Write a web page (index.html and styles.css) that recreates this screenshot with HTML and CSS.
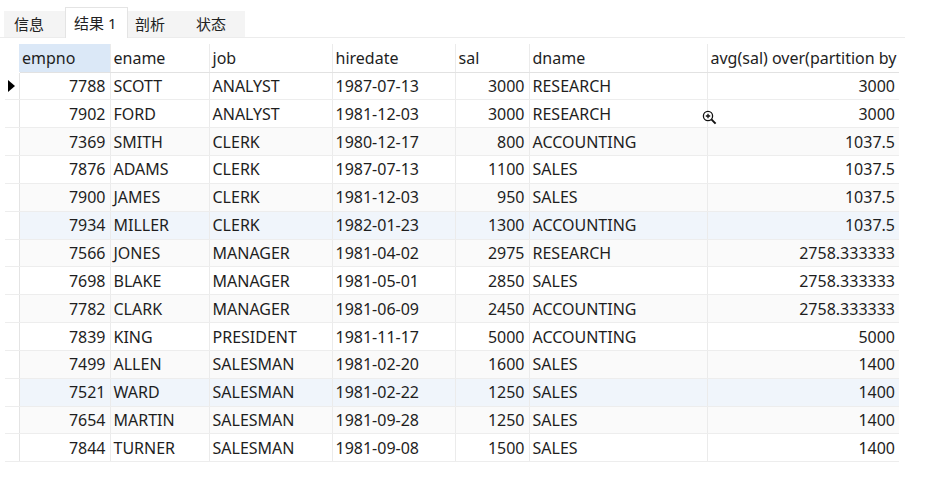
FILE: index.html
```html
<!DOCTYPE html>
<html lang="zh">
<head>
<meta charset="utf-8">
<link rel="stylesheet" href="styles.css">
</head>
<body>
<div class="page">
  <div class="tabbar">
    <div class="tab t1">信息</div>
    <div class="tab active">结果 1</div>
    <div class="tab t3">剖析</div>
    <div class="tab t4">状态</div>
  </div>
  <div class="gridwrap">
    <table class="grid">
      <colgroup>
        <col class="c-ind"><col class="c-empno"><col class="c-ename"><col class="c-job"><col class="c-hire"><col class="c-sal"><col class="c-dname"><col class="c-avg">
      </colgroup>
      <thead>
        <tr>
          <th class="ind"></th>
          <th class="sorted">empno</th>
          <th>ename</th>
          <th>job</th>
          <th>hiredate</th>
          <th>sal</th>
          <th>dname</th>
          <th>avg(sal) over(partition by</th>
        </tr>
      </thead>
      <tbody>
        <tr><td class="ind"><span class="arrow"></span></td><td class="num">7788</td><td>SCOTT</td><td>ANALYST</td><td>1987-07-13</td><td class="num">3000</td><td>RESEARCH</td><td class="num">3000</td></tr>
        <tr><td class="ind"></td><td class="num">7902</td><td>FORD</td><td>ANALYST</td><td>1981-12-03</td><td class="num">3000</td><td>RESEARCH</td><td class="num">3000</td></tr>
        <tr class="alt"><td class="ind"></td><td class="num">7369</td><td>SMITH</td><td>CLERK</td><td>1980-12-17</td><td class="num">800</td><td>ACCOUNTING</td><td class="num">1037.5</td></tr>
        <tr><td class="ind"></td><td class="num">7876</td><td>ADAMS</td><td>CLERK</td><td>1987-07-13</td><td class="num">1100</td><td>SALES</td><td class="num">1037.5</td></tr>
        <tr class="alt"><td class="ind"></td><td class="num">7900</td><td>JAMES</td><td>CLERK</td><td>1981-12-03</td><td class="num">950</td><td>SALES</td><td class="num">1037.5</td></tr>
        <tr class="hl"><td class="ind"></td><td class="num">7934</td><td>MILLER</td><td>CLERK</td><td>1982-01-23</td><td class="num">1300</td><td>ACCOUNTING</td><td class="num">1037.5</td></tr>
        <tr class="alt"><td class="ind"></td><td class="num">7566</td><td>JONES</td><td>MANAGER</td><td>1981-04-02</td><td class="num">2975</td><td>RESEARCH</td><td class="num">2758.333333</td></tr>
        <tr><td class="ind"></td><td class="num">7698</td><td>BLAKE</td><td>MANAGER</td><td>1981-05-01</td><td class="num">2850</td><td>SALES</td><td class="num">2758.333333</td></tr>
        <tr class="alt"><td class="ind"></td><td class="num">7782</td><td>CLARK</td><td>MANAGER</td><td>1981-06-09</td><td class="num">2450</td><td>ACCOUNTING</td><td class="num">2758.333333</td></tr>
        <tr><td class="ind"></td><td class="num">7839</td><td>KING</td><td>PRESIDENT</td><td>1981-11-17</td><td class="num">5000</td><td>ACCOUNTING</td><td class="num">5000</td></tr>
        <tr class="alt"><td class="ind"></td><td class="num">7499</td><td>ALLEN</td><td>SALESMAN</td><td>1981-02-20</td><td class="num">1600</td><td>SALES</td><td class="num">1400</td></tr>
        <tr class="hl"><td class="ind"></td><td class="num">7521</td><td>WARD</td><td>SALESMAN</td><td>1981-02-22</td><td class="num">1250</td><td>SALES</td><td class="num">1400</td></tr>
        <tr class="alt"><td class="ind"></td><td class="num">7654</td><td>MARTIN</td><td>SALESMAN</td><td>1981-09-28</td><td class="num">1250</td><td>SALES</td><td class="num">1400</td></tr>
        <tr><td class="ind"></td><td class="num">7844</td><td>TURNER</td><td>SALESMAN</td><td>1981-09-08</td><td class="num">1500</td><td>SALES</td><td class="num">1400</td></tr>
      </tbody>
    </table>
    <svg class="cursor" width="16" height="16" viewBox="0 0 16 16">
      <circle cx="6" cy="6" r="4.6" fill="#fff" stroke="#111" stroke-width="1.3"/>
      <path d="M3.8 6h4.4M6 3.8v4.4" stroke="#111" stroke-width="1.3"/>
      <path d="M9.4 9.4l4.2 4.2" stroke="#111" stroke-width="2"/>
    </svg>
  </div>
</div>
</body>
</html>
```
FILE: styles.css
```css
html, body {
  margin: 0;
  padding: 0;
  background: #ffffff;
}
body {
  font-family: "Noto Sans", "Noto Sans CJK SC", sans-serif;
  color: #1e1e1e;
  width: 933px;
  height: 489px;
  overflow: hidden;
}
.tabbar {
  display: flex;
  align-items: flex-end;
  height: 37px;
  border-bottom: 1px solid #ececec;
  margin-right: 28px;
  padding-left: 4px;
}
.tab {
  height: 26px;
  line-height: 26px;
  font-size: 15px;
  background: #f4f4f4;
  color: #222;
  box-sizing: border-box;
}
.tab.t1 {
  width: 61px;
  padding-left: 10px;
}
.tab.active {
  width: 63px;
  padding-left: 8px;
  background: #ffffff;
  height: 31px;
  line-height: 30px;
  border: 1px solid #e4e4e4;
  border-bottom: none;
  margin-bottom: -1px;
}
.tab.t3 {
  width: 55px;
  padding-left: 7px;
}
.tab.t4 {
  width: 62px;
  padding-left: 13px;
}
.gridwrap {
  position: relative;
  padding: 6px 0 0 5px;
}
.grid {
  border-collapse: collapse;
  table-layout: fixed;
  width: 894px;
  font-size: 16px;
}
.c-ind { width: 14px; }
.c-empno { width: 91px; }
.c-ename { width: 99px; }
.c-job { width: 123px; }
.c-hire { width: 123px; }
.c-sal { width: 74px; }
.c-dname { width: 178px; }
.c-avg { width: 192px; }
.grid th, .grid td {
  height: 27.85px;
  padding: 0 4px 0 3px;
  white-space: nowrap;
  overflow: hidden;
  text-align: left;
  font-weight: normal;
  border-left: 1px solid #ebebeb;
  border-bottom: 1px solid #ededed;
  box-sizing: border-box;
}
.grid th {
  height: 28px;
  font-size: 16px;
  border-bottom: 1px solid #e2e2e2;
  padding-top: 1px;
}
.grid th.ind {
  border: none;
  border-bottom: 1px solid #ffffff;
}
.grid th.sorted {
  background: #dbe8f7;
  border-left: none;
}
.grid td.ind {
  padding: 0;
  border-left: none;
  border-right: 1px solid #e4e4e4;
}
.grid td.num {
  text-align: right;
}
.grid tbody tr td:nth-child(2) {
  border-left: none;
}
.grid tr.alt td {
  background: #fafafa;
}
.grid tr.hl td {
  background: #f0f5fb;
}
.grid tr td.ind {
  background: #ffffff;
}
.arrow {
  display: block;
  width: 0;
  height: 0;
  margin-left: 3px;
  border-top: 6px solid transparent;
  border-bottom: 6px solid transparent;
  border-left: 7px solid #000;
}
.cursor {
  position: absolute;
  left: 702px;
  top: 72px;
}
```
